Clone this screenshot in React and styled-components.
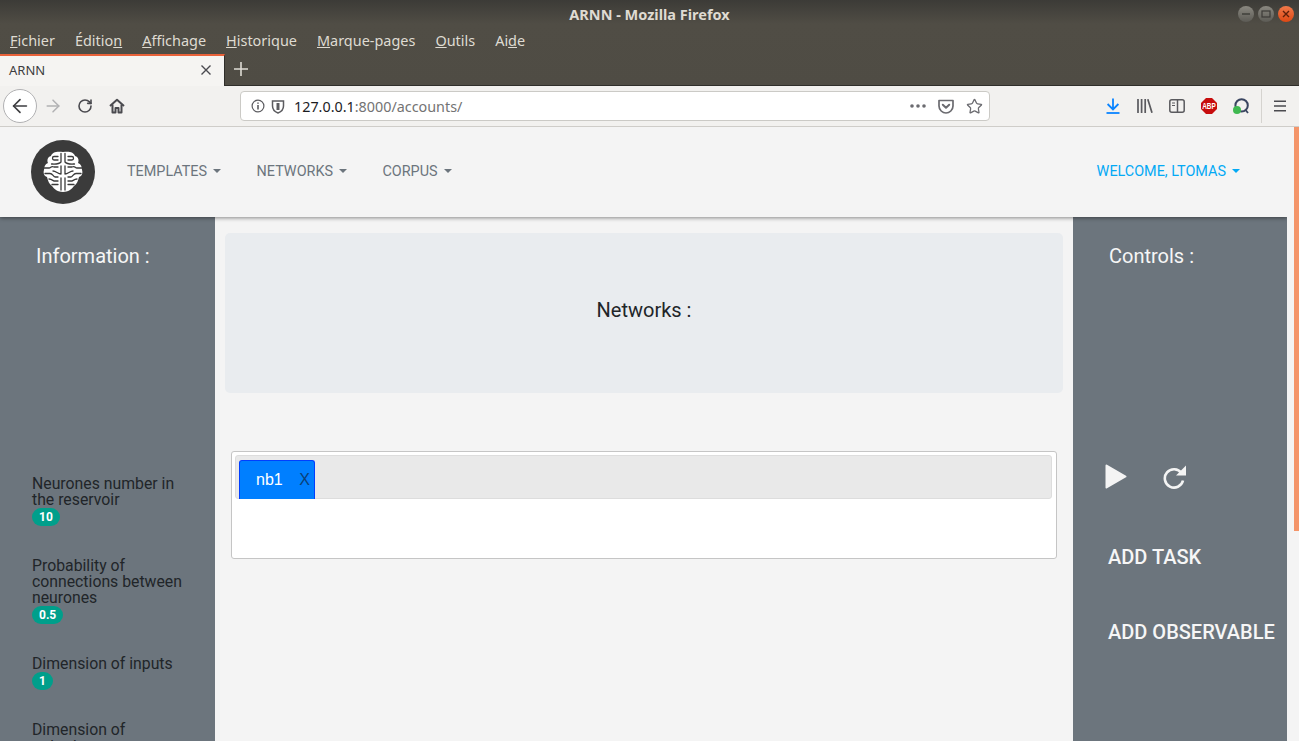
import React from 'react'
import styled, { createGlobalStyle } from 'styled-components'
import { ArrowLeft, ArrowRight, RotateCw, Star } from 'lucide-react'

const GlobalStyle = createGlobalStyle`
	html, body {
		margin: 0;
		height: 100%;
		overflow: hidden;
		background: #f4f4f4;
	}
	* {
		box-sizing: border-box;
	}
`

const MENU = [
	['F', 'ichier'],
	['', 'Éditio', 'n'],
	['A', 'ffichage'],
	['H', 'istorique'],
	['M', 'arque-pages'],
	['O', 'utils'],
	['', 'Ai', 'd', 'e']
]

const STATS = [
	{ label: 'Neurones number in the reservoir', value: '10' },
	{ label: 'Probability of connections between neurones', value: '0.5' },
	{ label: 'Dimension of inputs', value: '1' },
	{ label: 'Dimension of\noutputs', value: '1' }
]

const BrainHalf = () => (
	<g>
		<path
			d="M20 2 C14 1 9 2 8 6 C4 7 4 11 5 13 C2 14 1 17 1 20 C0 23 1 26 4 27 C5 31 6 34 9 36 C11 39 15 42 20 42 Z"
			fill="#fff"
		/>
		<g fill="none" stroke="#3b3b3b" strokeWidth="1.3" strokeLinecap="round" strokeLinejoin="round">
			<path d="M18 3.5 V12 C16 14.5 12 14 8.5 14" />
			<path d="M15 6.5 H11 C9 6.5 9 10 11 10 H15" />
			<path d="M1 18 H6 C8 18 8 15.5 11 17 H15" />
			<path d="M18 16 V24 C15 24 13 21 10 21" />
			<path d="M2 23.5 H7 C9.5 23.5 10 26 12 27 H15" />
			<path d="M18 28 V40" />
			<path d="M6 29 C9 29 10 31 11 31 H15" />
			<path d="M9 34.5 H15" />
		</g>
	</g>
)

const BrainLogo = () => (
	<Logo>
		<svg width="40" height="44" viewBox="0 0 40 44">
			<BrainHalf />
			<g transform="translate(40 0) scale(-1 1)">
				<BrainHalf />
			</g>
		</svg>
	</Logo>
)

const HomeIcon = () => (
	<svg width="16" height="16" viewBox="0 0 16 16" fill="none" stroke="#4a4a4f" strokeWidth="2" strokeLinejoin="round">
		<path d="M1 8 L8 1.8 L15 8" />
		<path d="M3.5 6.5 V14.5 H6.5 V10 H9.5 V14.5 H12.5 V6.5" />
	</svg>
)

const InfoIcon = () => (
	<svg width="14" height="14" viewBox="0 0 14 14" fill="none" stroke="#5c5c60" strokeWidth="1.2">
		<circle cx="7" cy="7" r="5.9" />
		<path d="M7 6 V10.5 M7 3.4 V4.8" strokeWidth="1.6" />
	</svg>
)

const ShieldIcon = () => (
	<svg width="14" height="15" viewBox="0 0 14 15" fill="none" stroke="#5c5c60" strokeWidth="1.5">
		<path d="M1.5 2 H12.5 V7 C12.5 10.5 10 12.8 7 14 C4 12.8 1.5 10.5 1.5 7 Z" />
		<path d="M7 4 V11" strokeWidth="3" />
	</svg>
)

const DotsIcon = () => (
	<svg width="16" height="4" viewBox="0 0 16 4" fill="#6b6b70">
		<circle cx="2" cy="2" r="1.8" />
		<circle cx="8" cy="2" r="1.8" />
		<circle cx="14" cy="2" r="1.8" />
	</svg>
)

const PocketIcon = () => (
	<svg width="16" height="15" viewBox="0 0 16 15" fill="none" stroke="#6b6b70" strokeWidth="1.7" strokeLinejoin="round">
		<path d="M1 1.5 H15 V7 C15 11 11.5 14 8 14 C4.5 14 1 11 1 7 Z" />
		<path d="M4.8 5.8 L8 8.8 L11.2 5.8" strokeLinecap="round" strokeWidth="2" />
	</svg>
)

const DownloadIcon = () => (
	<svg width="14" height="16" viewBox="0 0 14 16" fill="none" stroke="#0a84ff" strokeWidth="1.8">
		<path d="M7 0.5 V11 M1.6 6 L7 11.4 L12.4 6" />
		<path d="M0.5 15 H13.5" />
	</svg>
)

const LibraryIcon = () => (
	<svg width="16" height="14" viewBox="0 0 16 14" fill="none" stroke="#5a5a5e" strokeWidth="1.7">
		<path d="M1 0 V14 M4.6 0 V14 M8.2 0 V14 M10.8 0.2 L15 13.8" />
	</svg>
)

const SidebarIcon = () => (
	<svg width="16" height="14" viewBox="0 0 16 14" fill="none" stroke="#5a5a5e" strokeWidth="1.5">
		<rect x="0.8" y="0.8" width="14.4" height="12.4" rx="2" />
		<path d="M8.5 1 V13" />
		<path d="M3 4 H6 M3 6.5 H6" strokeWidth="1.2" />
	</svg>
)

const AbpIcon = () => (
	<svg width="16" height="16" viewBox="0 0 16 16">
		<path d="M5 0 H11 L16 5 V11 L11 16 H5 L0 11 V5 Z" fill="#c70d0d" />
		<text
			transform="translate(8 11) scale(0.78 1)"
			textAnchor="middle"
			fontFamily="'Liberation Sans', sans-serif"
			fontWeight="700"
			fontSize="8.2"
			fill="#fff"
		>
			ABP
		</text>
	</svg>
)

const RingIcon = () => (
	<svg width="16" height="16" viewBox="0 0 16 16" fill="none">
		<circle cx="8.6" cy="7.4" r="6.2" stroke="#3a4560" strokeWidth="2" />
		<path d="M12.6 12 L15 15" stroke="#3a4560" strokeWidth="1.8" />
		<circle cx="4" cy="12" r="4" fill="#3fb950" />
	</svg>
)

const HamburgerIcon = () => (
	<svg width="12" height="12" viewBox="0 0 12 12" stroke="#4a4a4f" strokeWidth="1.6">
		<path d="M0 1.2 H12 M0 6 H12 M0 10.8 H12" />
	</svg>
)

const PlayIcon = () => (
	<svg width="22" height="25" viewBox="0 0 22 25">
		<path d="M1.5 1.5 L20.5 12.5 L1.5 23.5 Z" fill="#f4f4f4" stroke="#f4f4f4" strokeWidth="2" strokeLinejoin="round" />
	</svg>
)

const RedoIcon = () => (
	<svg width="24" height="24" viewBox="0 0 24 24" fill="none">
		<path d="M19.5 8 A9.2 9.2 0 1 0 21 15.5" stroke="#f4f4f4" strokeWidth="2.6" />
		<path d="M24 0.5 V10.5 H14 Z" fill="#f4f4f4" />
	</svg>
)

const App = () => (
	<Window>
		<GlobalStyle />
		<Chrome>
			<TitleBar>
				<Title>ARNN - Mozilla Firefox</Title>
				<WindowButtons>
					<WindowButton>
						<svg width="10" height="10" viewBox="0 0 10 10" stroke="#3c3b37" strokeWidth="1.4">
							<path d="M1 5 H9" />
						</svg>
					</WindowButton>
					<WindowButton>
						<svg width="10" height="10" viewBox="0 0 10 10" fill="none" stroke="#3c3b37" strokeWidth="1.2">
							<rect x="1" y="2" width="8" height="6" />
						</svg>
					</WindowButton>
					<WindowButton close>
						<svg width="10" height="10" viewBox="0 0 10 10" stroke="#5e1f0a" strokeWidth="1.4">
							<path d="M2 2 L8 8 M8 2 L2 8" />
						</svg>
					</WindowButton>
				</WindowButtons>
			</TitleBar>
			<MenuBar>
				{MENU.map(([first, mid, under, last]) => (
					<MenuItem key={first + mid}>
						{first && <u>{first}</u>}
						{mid}
						{under && <u>{under}</u>}
						{last}
					</MenuItem>
				))}
			</MenuBar>
			<TabStrip>
				<BrowserTab>
					ARNN
					<TabClose>
						<svg width="10" height="10" viewBox="0 0 10 10" stroke="#4a4a4f" strokeWidth="1.4">
							<path d="M0.5 0.5 L9.5 9.5 M9.5 0.5 L0.5 9.5" />
						</svg>
					</TabClose>
				</BrowserTab>
				<NewTab>
					<svg width="14" height="14" viewBox="0 0 14 14" stroke="#dedbd4" strokeWidth="1.6">
						<path d="M7 0 V14 M0 7 H14" />
					</svg>
				</NewTab>
			</TabStrip>
		</Chrome>
		<Toolbar>
			<BackButton>
				<ArrowLeft size={22} color="#3d3d40" strokeWidth={1.8} />
			</BackButton>
			<ToolButton>
				<ArrowRight size={20} color="#b1b1b3" strokeWidth={1.8} />
			</ToolButton>
			<ToolButton>
				<RotateCw size={16} color="#4a4a4f" strokeWidth={2.4} />
			</ToolButton>
			<ToolButton>
				<HomeIcon />
			</ToolButton>
			<UrlBar>
				<InfoIcon />
				<ShieldIcon />
				<Url>
					<b>127.0.0.1</b>:8000/accounts/
				</Url>
				<UrlActions>
					<DotsIcon />
					<PocketIcon />
					<Star size={17} color="#6b6b70" strokeWidth={1.8} />
				</UrlActions>
			</UrlBar>
			<ToolGroup>
				<ToolButton>
					<DownloadIcon />
				</ToolButton>
				<ToolButton>
					<LibraryIcon />
				</ToolButton>
				<ToolButton>
					<SidebarIcon />
				</ToolButton>
				<ToolButton>
					<AbpIcon />
				</ToolButton>
				<ToolButton>
					<RingIcon />
				</ToolButton>
				<ToolSeparator />
				<ToolButton>
					<HamburgerIcon />
				</ToolButton>
			</ToolGroup>
		</Toolbar>
		<Viewport>
			<Page>
				<Navbar>
					<BrainLogo />
					<NavLinks>
						<NavLink>Templates</NavLink>
						<NavLink>Networks</NavLink>
						<NavLink>Corpus</NavLink>
					</NavLinks>
					<NavLink active>Welcome, ltomas</NavLink>
				</Navbar>
				<Columns>
					<InfoPanel>
						<PanelTitle>Information :</PanelTitle>
						<StatList>
							{STATS.map(stat => (
								<Stat key={stat.label}>
									{stat.label}
									<div>
										<Badge>{stat.value}</Badge>
									</div>
								</Stat>
							))}
						</StatList>
					</InfoPanel>
					<Main>
						<Jumbotron>Networks :</Jumbotron>
						<TabsBox>
							<TabsHeader>
								<TabItem>
									nb1
									<TabRemove>X</TabRemove>
								</TabItem>
							</TabsHeader>
						</TabsBox>
					</Main>
					<ControlPanel>
						<ControlsTitle>Controls :</ControlsTitle>
						<Players>
							<PlayIcon />
							<RedoIcon />
						</Players>
						<ControlLink>Add task</ControlLink>
						<ControlLink>Add observable</ControlLink>
					</ControlPanel>
				</Columns>
			</Page>
			<Scrollbar>
				<ScrollThumb />
			</Scrollbar>
		</Viewport>
	</Window>
)

export default App

const Window = styled.div`
	display: flex;
	flex-direction: column;
	height: 100vh;
	overflow: hidden;
	font-family: 'Roboto', sans-serif;
`

const Chrome = styled.div`
	background: linear-gradient(#3c3b37, #504d45 24px, #4f4c44);
	color: #dfdbd2;
	font-family: 'Noto Sans', sans-serif;
`

const TitleBar = styled.div`
	position: relative;
	display: flex;
	justify-content: center;
	align-items: center;
	height: 27px;
`

const Title = styled.div`
	font-size: 14.5px;
	font-weight: 700;
	color: #dfdbd2;
`

const WindowButtons = styled.div`
	position: absolute;
	top: 6px;
	right: 5px;
	display: flex;
	gap: 4px;
`

const WindowButton = styled.div`
	width: 16px;
	height: 16px;
	border-radius: 50%;
	display: flex;
	align-items: center;
	justify-content: center;
	background: ${props =>
		props.close
			? 'linear-gradient(#f0794a, #dd4814)'
			: 'linear-gradient(#8a8880, #5c5b55)'};
`

const MenuBar = styled.div`
	display: flex;
	gap: 20px;
	height: 27px;
	padding: 0 0 0 10px;
	align-items: center;
`

const MenuItem = styled.span`
	font-size: 14.44px;
	color: #dfdbd2;
`

const TabStrip = styled.div`
	display: flex;
	height: 32px;
	border-bottom: 1px solid #2f2e2a;
`

const BrowserTab = styled.div`
	display: flex;
	align-items: center;
	justify-content: space-between;
	width: 225px;
	height: 32px;
	padding: 0 13px 2px 9px;
	background: #f5f4f2;
	border-top: 2px solid #e9623a;
	border-right: 1px solid #2f2e2a;
	color: #3d3d40;
	font-size: 13px;
`

const TabClose = styled.span`
	display: flex;
`

const NewTab = styled.div`
	display: flex;
	align-items: center;
	padding-left: 9px;
	margin-bottom: 2px;
`

const Toolbar = styled.div`
	display: flex;
	align-items: center;
	height: 41px;
	padding-left: 3px;
	background: #f2f1ef;
	border-bottom: 1px solid #cfcdc9;
`

const ToolButton = styled.div`
	display: flex;
	align-items: center;
	justify-content: center;
	width: 32px;
	height: 32px;
	flex: none;
`

const BackButton = styled(ToolButton)`
	width: 34px;
	height: 34px;
	border: 1px solid #b1b1b3;
	border-radius: 50%;
	background: #fff;
`

const UrlBar = styled.div`
	display: flex;
	align-items: center;
	width: 750px;
	height: 30px;
	margin-left: 107px;
	padding: 0 6px 0 10px;
	gap: 6px;
	background: #fff;
	border: 1px solid #cbcac6;
	border-radius: 4px;
`

const Url = styled.div`
	flex: 1;
	margin-left: 3px;
	font-family: 'Noto Sans', sans-serif;
	font-size: 14.35px;
	color: #737373;
	b {
		font-weight: 400;
		color: #1c1c1f;
	}
`

const UrlActions = styled.div`
	display: flex;
	align-items: center;
	gap: 12px;
`

const ToolGroup = styled.div`
	display: flex;
	align-items: center;
	margin-left: auto;
	padding-right: 3px;
`

const ToolSeparator = styled.div`
	width: 1px;
	height: 34px;
	margin: 0 2px 0 4px;
	background: #d5d3cf;
`

const Viewport = styled.div`
	flex: 1;
	min-height: 0;
	display: flex;
`

const Page = styled.div`
	flex: 1;
	min-width: 0;
	display: flex;
	flex-direction: column;
	overflow: hidden;
`

const Navbar = styled.nav`
	position: relative;
	z-index: 1;
	display: flex;
	align-items: center;
	justify-content: space-between;
	height: 90px;
	padding: 0 47px 0 31px;
	background: #f4f4f4;
	box-shadow: 0 1px 4px rgba(0, 0, 0, 0.45);
`

const Logo = styled.div`
	display: flex;
	align-items: center;
	justify-content: center;
	width: 64px;
	height: 64px;
	flex: none;
	border-radius: 50%;
	background: #3b3b3b;
`

const NavLinks = styled.div`
	flex: 1;
	display: flex;
	gap: 35.5px;
	margin-left: 32px;
`

const NavLink = styled.a`
	display: flex;
	align-items: center;
	padding-bottom: 2px;
	font-size: 14.4px;
	font-weight: 400;
	text-transform: uppercase;
	color: ${props => (props.active ? '#03a9f4' : '#6c757d')};
	&::after {
		content: '';
		margin-left: 6px;
		border-top: 4px solid currentColor;
		border-left: 4px solid transparent;
		border-right: 4px solid transparent;
	}
`

const Columns = styled.div`
	flex: 1;
	min-height: 0;
	display: flex;
`

const InfoPanel = styled.aside`
	width: 215px;
	flex: none;
	padding: 27px 31px 0 32px;
	background: #6c757d;
	overflow: hidden;
`

const PanelTitle = styled.div`
	margin-left: 4px;
	font-size: 20px;
	line-height: 24px;
	color: #f6f6f6;
`

const StatList = styled.div`
	display: flex;
	flex-direction: column;
	gap: 32px;
	margin-top: 208px;
`

const Stat = styled.div`
	font-size: 15.8px;
	line-height: 16px;
	white-space: pre-line;
	color: #212529;
`

const Badge = styled.span`
	display: inline-block;
	padding: 3px 7px;
	border-radius: 10px;
	background: #009f8b;
	color: #fff;
	font-size: 12px;
	font-weight: 700;
	line-height: 12px;
	vertical-align: top;
`

const Main = styled.main`
	flex: 1;
	min-width: 0;
	padding: 16px 10px 0;
`

const Jumbotron = styled.div`
	display: flex;
	align-items: center;
	justify-content: center;
	height: 160px;
	padding-bottom: 6px;
	border-radius: 5px;
	background: #e9ecef;
	color: #212529;
	font-size: 20px;
`

const TabsBox = styled.div`
	height: 108px;
	margin: 58px 6px 0;
	padding: 3px 4px 3px 3px;
	background: #fff;
	border: 1px solid #c5c5c5;
	border-radius: 3px;
`

const TabsHeader = styled.div`
	display: flex;
	align-items: flex-end;
	height: 44px;
	padding-left: 3px;
	background: #e9e9e9;
	border: 1px solid #dddddd;
	border-radius: 3px;
`

const TabItem = styled.div`
	position: relative;
	display: flex;
	align-items: center;
	width: 76px;
	height: 39px;
	margin-bottom: -1px;
	padding-left: 16px;
	background: #007fff;
	border: 1px solid #003eff;
	border-bottom: none;
	border-radius: 3px 3px 0 0;
	color: #fff;
	font-family: 'Liberation Sans', sans-serif;
	font-size: 16px;
`

const TabRemove = styled.span`
	position: absolute;
	right: 4px;
	color: #0a3f78;
`

const ControlPanel = styled.aside`
	width: 214px;
	flex: none;
	display: flex;
	flex-direction: column;
	align-items: flex-start;
	padding: 27px 0 0 35px;
	background: #6c757d;
`

const ControlsTitle = styled.div`
	margin-left: 1px;
	font-size: 20px;
	line-height: 24px;
	color: #f6f6f6;
`

const Players = styled.div`
	display: flex;
	align-items: center;
	gap: 35px;
	margin: 196px 0 0 -3px;
`

const ControlLink = styled.a`
	margin-top: 56px;
	font-size: 20px;
	line-height: 24px;
	font-weight: 500;
	text-transform: uppercase;
	color: #f6f6f6;
	& + & {
		margin-top: 51px;
	}
`

const Scrollbar = styled.div`
	width: 12px;
	flex: none;
	display: flex;
	justify-content: flex-end;
	background: #f4f4f4;
`

const ScrollThumb = styled.div`
	width: 5px;
	height: 404px;
	background: #f4956a;
`
